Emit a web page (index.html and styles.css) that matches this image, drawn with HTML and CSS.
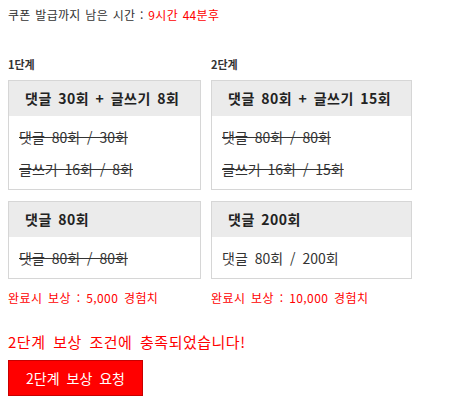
FILE: index.html
```html
<!DOCTYPE html>
<html lang="ko">
<head>
<meta charset="utf-8">
<link rel="stylesheet" href="styles.css">
</head>
<body>
<div class="page">
  <p class="timer">쿠폰 발급까지 남은 시간 : <span class="red">9시간 44분후</span></p>
  <div class="stages">
    <div class="stage stage-1">
      <h3 class="stage-title">1단계</h3>
      <div class="box">
        <div class="box-head">댓글 30회 + 글쓰기 8회</div>
        <div class="box-body">
          <div class="line done">댓글 80회 / 30회</div>
          <div class="line done">글쓰기 16회 / 8회</div>
        </div>
      </div>
      <div class="box">
        <div class="box-head">댓글 80회</div>
        <div class="box-body">
          <div class="line done">댓글 80회 / 80회</div>
        </div>
      </div>
      <p class="reward">완료시 보상 : 5,000 경험치</p>
    </div>
    <div class="stage stage-2">
      <h3 class="stage-title">2단계</h3>
      <div class="box">
        <div class="box-head">댓글 80회 + 글쓰기 15회</div>
        <div class="box-body">
          <div class="line done">댓글 80회 / 80회</div>
          <div class="line done">글쓰기 16회 / 15회</div>
        </div>
      </div>
      <div class="box">
        <div class="box-head">댓글 200회</div>
        <div class="box-body">
          <div class="line">댓글 80회 / 200회</div>
        </div>
      </div>
      <p class="reward">완료시 보상 : 10,000 경험치</p>
    </div>
  </div>
  <p class="message">2단계 보상 조건에 충족되었습니다!</p>
  <button class="claim">2단계 보상 요청</button>
</div>
</body>
</html>
```
FILE: styles.css
```css
* { box-sizing: border-box; }
html, body { margin: 0; padding: 0; background: #fff; }
body {
  font-family: "Noto Sans CJK KR", "Noto Sans", sans-serif;
  color: #333;
}
.page { padding: 6px 8px; }
.timer {
  margin: 0;
  font-size: 12px;
  line-height: 18px;
  height: 18px;
  word-spacing: 1px;
  letter-spacing: 0.3px;
}
.red { color: #ff0000; }
.stages {
  display: flex;
  gap: 10px;
  margin-top: 32px;
}
.stage-1 { width: 193px; }
.stage-2 { width: 201px; }
.stage-title {
  margin: 0;
  font-size: 11px;
  font-weight: bold;
  line-height: 16px;
  height: 16px;
  color: #333;
}
.box {
  border: 1px solid #d6d6d6;
  margin-top: 8px;
}
.box + .box { margin-top: 11px; }
.box-head {
  background: #ebebeb;
  height: 35px;
  line-height: 35px;
  padding-left: 16px;
  font-size: 14px;
  font-weight: bold;
  color: #222;
  word-spacing: 2px;
  letter-spacing: 0.5px;
}
.box-body { padding: 5px 10px 4px; }
.line {
  font-size: 14px;
  line-height: 32px;
  height: 32px;
  color: #333;
  word-spacing: 3px;
}
.done { text-decoration: line-through; }
.reward {
  margin: 11px 0 0;
  font-size: 12px;
  line-height: 16px;
  color: #ff0000;
  word-spacing: 2px;
  letter-spacing: 0.4px;
}
.message {
  margin: 26px 0 0;
  font-size: 15px;
  line-height: 20px;
  color: #ff0000;
  word-spacing: 3px;
  letter-spacing: 0.5px;
}
.claim {
  display: block;
  margin-top: 8px;
  width: 135px;
  height: 36px;
  background: #ff0000;
  border: 1px solid #c80000;
  color: #fff;
  font-family: "Noto Sans CJK KR", "Noto Sans", sans-serif;
  font-size: 14px;
  word-spacing: 3px;
  padding: 0;
  cursor: pointer;
}
```
